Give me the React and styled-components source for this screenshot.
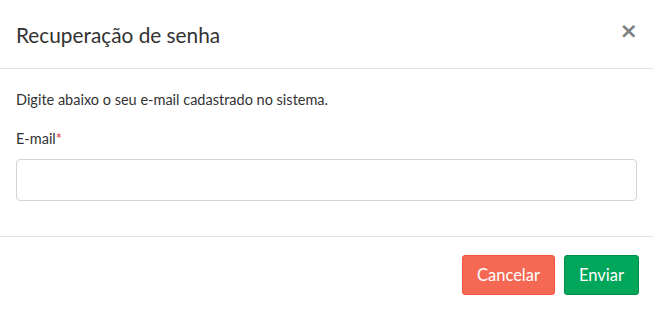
import React from 'react';
import styled, { createGlobalStyle } from 'styled-components';

const GlobalStyle = createGlobalStyle`
  html, body {
    margin: 0;
    padding: 0;
    background: #ffffff;
  }
  * {
    box-sizing: border-box;
  }
`;

const Modal = styled.div`
  width: 653px;
  height: 309px;
  background: #ffffff;
  font-family: Lato, "Open Sans", sans-serif;
  color: #212529;
  display: flex;
  flex-direction: column;
`;

const Header = styled.div`
  height: 69px;
  display: flex;
  align-items: center;
  justify-content: space-between;
  padding: 0 15px 0 16px;
  border-bottom: 1px solid #dee2e6;
`;

const Title = styled.h5`
  margin: 0;
  font-size: 20.8px;
  font-weight: 400;
  color: #333333;
`;

const Close = styled.button`
  border: 0;
  background: none;
  padding: 0;
  font-family: "DejaVu Sans", sans-serif;
  font-size: 22px;
  line-height: 1;
  font-weight: 700;
  color: #808080;
  cursor: pointer;
  margin: -6px 0 0 0;
`;

const Body = styled.div`
  padding: 21px 16px 35px;
  border-bottom: 1px solid #dee2e6;
`;

const Hint = styled.p`
  margin: 0 0 19px;
  font-size: 14.5px;
  line-height: 20px;
  color: #333333;
`;

const Label = styled.label`
  display: block;
  font-size: 14.5px;
  line-height: 20px;
  color: #333333;
  margin-bottom: 10px;
`;

const Required = styled.span`
  color: #dc3545;
`;

const Input = styled.input`
  display: block;
  width: 100%;
  height: 42px;
  border: 1px solid #ced4da;
  border-radius: 4px;
  padding: 6px 12px;
  font-family: inherit;
  font-size: 14px;
`;

const Footer = styled.div`
  display: flex;
  justify-content: flex-end;
  gap: 9px;
  padding: 18px 14px 0;
`;

const Button = styled.button`
  height: 40px;
  padding: 0 14px;
  border-radius: 3px;
  border: 1px solid ${p => p.$border};
  background: ${p => p.$bg};
  color: #ffffff;
  font-family: inherit;
  font-size: 16.5px;
  cursor: pointer;
`;

export default function App() {
  return (
    <>
      <GlobalStyle />
      <Modal>
        <Header>
          <Title>Recuperação de senha</Title>
          <Close aria-label="Fechar">×</Close>
        </Header>
        <Body>
          <Hint>Digite abaixo o seu e-mail cadastrado no sistema.</Hint>
          <Label>
            E-mail<Required>*</Required>
          </Label>
          <Input type="email" />
        </Body>
        <Footer>
          <Button $bg="#f56954" $border="#f4543c">Cancelar</Button>
          <Button $bg="#00a65a" $border="#008d4c">Enviar</Button>
        </Footer>
      </Modal>
    </>
  );
}
